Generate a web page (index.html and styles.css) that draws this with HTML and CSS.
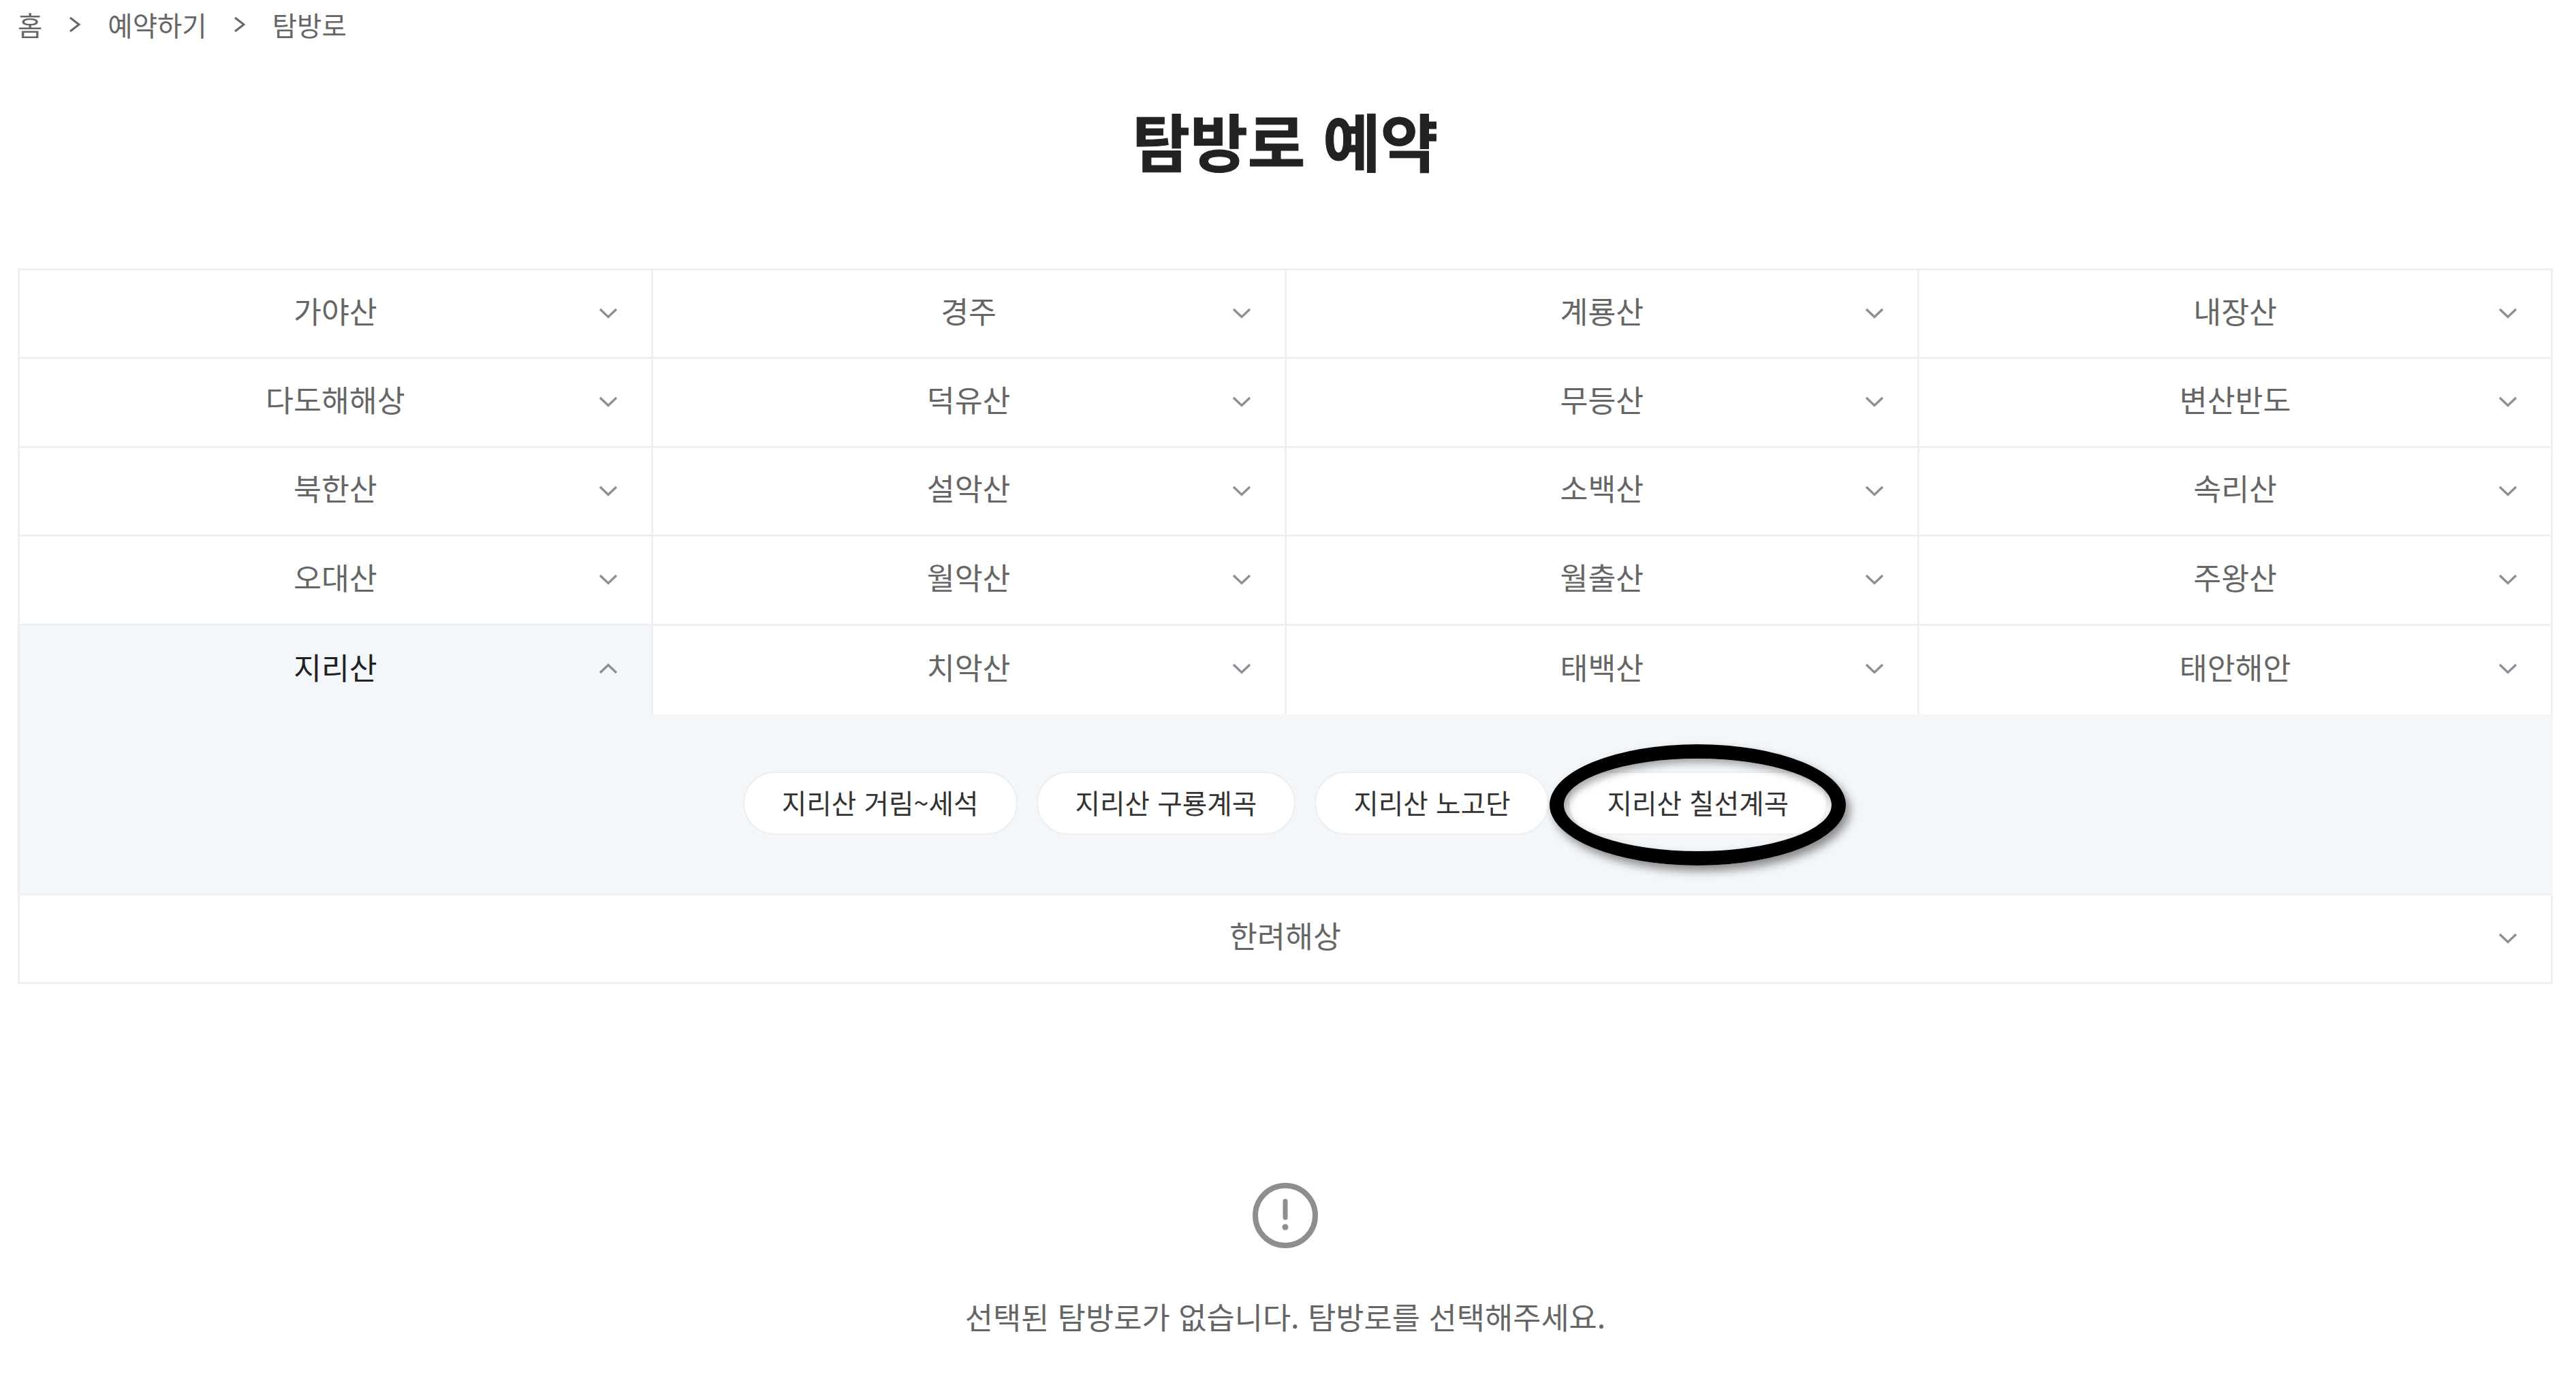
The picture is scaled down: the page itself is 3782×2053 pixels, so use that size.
FILE: index.html
```html
<!DOCTYPE html>
<html lang="ko">
<head>
<meta charset="utf-8">
<title>탐방로 예약</title>
<link rel="stylesheet" href="styles.css">
</head>
<body>
<svg class="defs" width="0" height="0" aria-hidden="true">
  <symbol id="down" viewBox="0 0 30 18"><path d="M3 3 L15 14.5 L27 3" fill="none" stroke="currentColor" stroke-width="3.4"/></symbol>
  <symbol id="up" viewBox="0 0 30 18"><path d="M3 15 L15 3.5 L27 15" fill="none" stroke="currentColor" stroke-width="3.4"/></symbol>
  <symbol id="crumb" viewBox="0 0 18 24"><path d="M2 2 L15 12 L2 22" fill="none" stroke="currentColor" stroke-width="3"/></symbol>
</svg>
<nav class="crumbs">
  <span>홈</span>
  <svg class="crumb-sep"><use href="#crumb"/></svg>
  <span>예약하기</span>
  <svg class="crumb-sep"><use href="#crumb"/></svg>
  <span>탐방로</span>
</nav>
<h1 class="title">탐방로 예약</h1>
<section class="parks">
  <div class="park"><span>가야산</span><svg class="chev"><use href="#down"/></svg></div>
  <div class="park"><span>경주</span><svg class="chev"><use href="#down"/></svg></div>
  <div class="park"><span>계룡산</span><svg class="chev"><use href="#down"/></svg></div>
  <div class="park"><span>내장산</span><svg class="chev"><use href="#down"/></svg></div>
  <div class="park"><span>다도해해상</span><svg class="chev"><use href="#down"/></svg></div>
  <div class="park"><span>덕유산</span><svg class="chev"><use href="#down"/></svg></div>
  <div class="park"><span>무등산</span><svg class="chev"><use href="#down"/></svg></div>
  <div class="park"><span>변산반도</span><svg class="chev"><use href="#down"/></svg></div>
  <div class="park"><span>북한산</span><svg class="chev"><use href="#down"/></svg></div>
  <div class="park"><span>설악산</span><svg class="chev"><use href="#down"/></svg></div>
  <div class="park"><span>소백산</span><svg class="chev"><use href="#down"/></svg></div>
  <div class="park"><span>속리산</span><svg class="chev"><use href="#down"/></svg></div>
  <div class="park"><span>오대산</span><svg class="chev"><use href="#down"/></svg></div>
  <div class="park"><span>월악산</span><svg class="chev"><use href="#down"/></svg></div>
  <div class="park"><span>월출산</span><svg class="chev"><use href="#down"/></svg></div>
  <div class="park"><span>주왕산</span><svg class="chev"><use href="#down"/></svg></div>
  <div class="park park-open"><span>지리산</span><svg class="chev"><use href="#up"/></svg></div>
  <div class="park park-flush"><span>치악산</span><svg class="chev"><use href="#down"/></svg></div>
  <div class="park park-flush"><span>태백산</span><svg class="chev"><use href="#down"/></svg></div>
  <div class="park park-flush"><span>태안해안</span><svg class="chev"><use href="#down"/></svg></div>
  <div class="trails">
    <a class="pill">지리산 거림~세석</a>
    <a class="pill">지리산 구룡계곡</a>
    <a class="pill">지리산 노고단</a>
    <a class="pill">지리산 칠선계곡</a>
  </div>
  <div class="park park-wide"><span>한려해상</span><svg class="chev"><use href="#down"/></svg></div>
</section>
<section class="empty">
  <svg class="empty-icon" viewBox="0 0 98 98">
    <circle cx="49" cy="49" r="44" fill="none" stroke="#8e8e8e" stroke-width="8"/>
    <path d="M49 28 V52" fill="none" stroke="#8e8e8e" stroke-width="7" stroke-linecap="round"/>
    <circle cx="49" cy="66" r="4.5" fill="#8e8e8e"/>
  </svg>
  <p class="empty-text">선택된 탐방로가 없습니다. 탐방로를 선택해주세요.</p>
</section>
<div class="annotation"></div>
</body>
</html>
```
FILE: styles.css
```css
* { box-sizing: border-box; }
html, body { margin: 0; padding: 0; background: #fff; }
body {
  position: relative;
  height: 2053px;
  padding: 0 34px 0 26px;
  overflow: hidden;
  font-family: "Noto Sans CJK KR", "Noto Sans", sans-serif;
  color: #666;
}
.defs { position: absolute; }
.crumbs {
  display: flex;
  align-items: center;
  height: 72px;
  gap: 39px;
  font-size: 39.5px;
  color: #666;
}
.crumbs span { margin-top: -2px; }
.crumb-sep { width: 18px; height: 24px; color: #666; }
.title {
  margin: 68px 0 124px;
  height: 130px;
  line-height: 130px;
  text-align: center;
  font-size: 92px;
  font-weight: 700;
  color: #222;
  -webkit-text-stroke: 1px #222;
}
.parks {
  display: grid;
  grid-template-columns: repeat(4, 1fr);
  border-top: 3px solid #eeeff1;
  border-left: 3px solid #eeeff1;
}
.park {
  position: relative;
  display: flex;
  align-items: center;
  justify-content: center;
  height: 130.4px;
  border-right: 3px solid #eeeff1;
  border-bottom: 3px solid #eeeff1;
  font-size: 44.5px;
  color: #666;
}
.park span { margin-top: -11px; }
.chev {
  position: absolute;
  right: 48px;
  top: 54px;
  width: 30px;
  height: 18px;
  color: #8b9098;
}
.park-flush { border-bottom: 0; }
.park-open { border-bottom: 0; background: #f4f7fa; color: #222; }
.park-wide { grid-column: 1 / -1; height: 130px; }
.trails {
  grid-column: 1 / -1;
  display: flex;
  justify-content: center;
  align-items: flex-start;
  gap: 28px;
  height: 266px;
  padding-top: 84px;
  background: #f4f7fa;
  border-right: 3px solid #f4f7fa;
  border-bottom: 3px solid #eeeff1;
}
.pill {
  display: flex;
  align-items: center;
  height: 93px;
  padding: 0 55px 3px;
  border: 2px solid #eceef0;
  border-radius: 47px;
  background: #fff;
  font-size: 39.7px;
  color: #333;
}
.empty {
  display: flex;
  flex-direction: column;
  align-items: center;
  margin-top: 291px;
}
.empty-icon { width: 98px; height: 98px; }
.empty-text {
  margin: 66px 0 0;
  font-size: 44.8px;
  color: #666;
}
.annotation {
  position: absolute;
  left: 2275px;
  top: 1093px;
  width: 435px;
  height: 178px;
  border: 21px solid #000;
  border-radius: 50%;
  box-shadow: 6px 8px 14px rgba(0,0,0,.45), inset 4px 6px 12px rgba(0,0,0,.35);
}
```
